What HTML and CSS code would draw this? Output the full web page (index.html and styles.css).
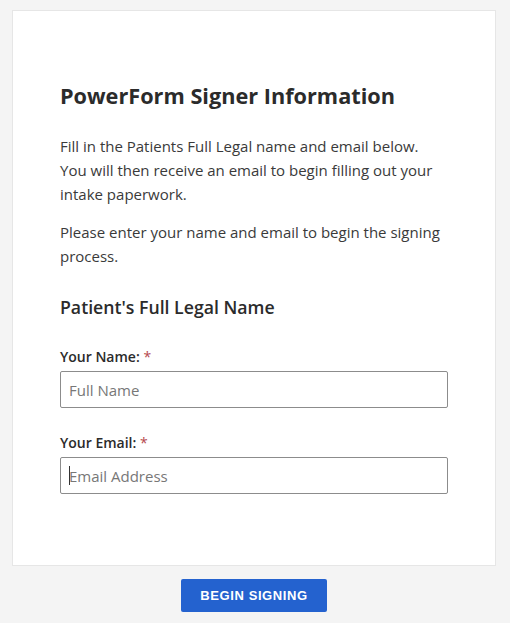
FILE: index.html
```html
<!DOCTYPE html>
<html>
<head>
<meta charset="utf-8">
<link rel="stylesheet" href="styles.css">
</head>
<body>
<main class="page">
  <section class="card">
    <h1 class="title">PowerForm Signer Information</h1>
    <p class="text">Fill in the Patients Full Legal name and email below. You will then receive an email to begin filling out your intake paperwork.</p>
    <p class="text">Please enter your name and email to begin the signing process.</p>
    <h2 class="subtitle">Patient's Full Legal Name</h2>
    <div class="field">
      <label class="label">Your Name: <span class="req">*</span></label>
      <input class="input" type="text" placeholder="Full Name">
    </div>
    <div class="field">
      <label class="label">Your Email: <span class="req">*</span></label>
      <div class="input-wrap">
        <input class="input" type="text" placeholder="Email Address">
        <span class="caret"></span>
      </div>
    </div>
  </section>
  <div class="actions">
    <button class="btn">BEGIN SIGNING</button>
  </div>
</main>
</body>
</html>
```
FILE: styles.css
```css
* { box-sizing: border-box; }
html, body { margin: 0; padding: 0; background: #f4f4f4; }
body { font-family: "Open Sans", "Lato", sans-serif; color: #333; }
.page { padding: 10px 14px 0 12px; }
.card {
  background: #fff;
  border: 1px solid #e6e6e6;
  height: 556px;
  padding: 70px 47px 0 47px;
}
.title {
  margin: 0 0 23px;
  font-size: 21.7px;
  line-height: 30px;
  font-weight: 700;
  color: #2b2b2b;
}
.text {
  margin: 0 0 14px;
  font-size: 15px;
  line-height: 24px;
  color: #3a3a3a;
  max-width: 382px;
}
.subtitle {
  margin: 27px 0 28px;
  font-size: 17.7px;
  line-height: 24px;
  font-weight: 600;
  color: #2b2b2b;
}
.field { display: flex; flex-direction: column; margin-bottom: 25px; }
.label {
  font-size: 14px;
  font-weight: 600;
  line-height: 20px;
  margin-bottom: 4px;
  color: #2b2b2b;
}
.req { color: #b5474d; font-weight: 400; }
.input-wrap { position: relative; }
.input {
  width: 388px;
  height: 37px;
  border: 1px solid #8c8c8c;
  border-radius: 2px;
  padding: 0 8px;
  font-family: "Open Sans", "Lato", sans-serif;
  font-size: 15px;
  color: #333;
  background: #fff;
  outline: none;
}
.input::placeholder { color: #777; }
.caret {
  position: absolute;
  left: 9px;
  top: 9px;
  width: 1px;
  height: 19px;
  background: #333;
}
.actions { display: flex; justify-content: center; padding-top: 13px; }
.btn {
  width: 146px;
  height: 33px;
  background: #2462cf;
  color: #fff;
  border: none;
  border-radius: 2px;
  font-family: "Liberation Sans", Arial, sans-serif;
  font-weight: 700;
  font-size: 13px;
  letter-spacing: 0.6px;
}
```
